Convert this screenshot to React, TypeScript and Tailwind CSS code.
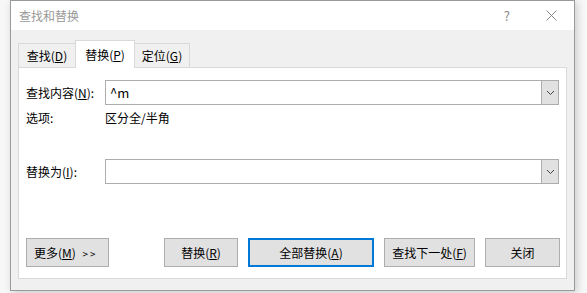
import React from 'react';

const font = { fontFamily: '"Noto Sans CJK SC", "Noto Sans", sans-serif' };

function Combo() {
  return (
    <div className="flex h-[25px] w-[454px] border border-[#adadad] bg-white">
      <div className="flex-1" />
      <div className="flex w-[17px] items-center justify-center border-l border-[#adadad] bg-[#e1e1e1]">
        <svg width="9" height="6" viewBox="0 0 9 6">
          <path d="M1 1l3.5 3.5L8 1" fill="none" stroke="#444" strokeWidth="1" />
        </svg>
      </div>
    </div>
  );
}

function Btn({ children, w, primary }: { children: React.ReactNode; w: string; primary?: boolean }) {
  return (
    <div
      className={`flex h-[29px] items-center justify-center bg-[#e1e1e1] text-[12px] text-black ${w} ${
        primary ? 'border-2 border-[#0078d7]' : 'border border-[#adadad]'
      }`}
    >
      {children}
    </div>
  );
}

export default function App() {
  return (
    <div className="h-[293px] w-[587px] overflow-hidden bg-[#f7f7f7]" style={font}>
      <div className="ml-[10px] flex h-[291px] w-[565px] flex-col border border-[#9a9a9a] bg-[#f0f0f0] shadow-[2px_2px_8px_rgba(0,0,0,0.18)]">
        {/* title bar */}
        <div className="flex h-[29px] items-center bg-white text-[12px] text-[#999]">
          <span className="ml-[8px]">查找和替换</span>
          <span className="ml-auto mr-[36px] text-[13px] text-[#888]">?</span>
          <svg className="mr-[17px]" width="11" height="11" viewBox="0 0 11 11">
            <path d="M0.5 0.5l10 10M10.5 0.5l-10 10" stroke="#888" strokeWidth="1" />
          </svg>
        </div>

        {/* tabs */}
        <div className="ml-[7px] mt-[10px] flex h-[27px] items-end text-[12px] text-black">
          <div className="-mr-px flex h-[24px] w-[58px] items-center justify-center border border-b-0 border-[#d9d9d9] bg-[#f0f0f0]">
            查找(<u>D</u>)
          </div>
          <div className="relative z-10 -mb-px flex h-[28px] w-[60px] items-center justify-center border border-b-0 border-[#d9d9d9] bg-white">
            替换(<u>P</u>)
          </div>
          <div className="-ml-px flex h-[24px] w-[56px] items-center justify-center border border-b-0 border-[#d9d9d9] bg-[#f0f0f0]">
            定位(<u>G</u>)
          </div>
        </div>

        {/* panel */}
        <div className="ml-[7px] flex h-[212px] w-[549px] flex-col border border-[#d9d9d9] bg-white text-[12px] text-black">
          <div className="mt-[12px] flex items-center">
            <span className="ml-[7px] w-[79px]">
              查找内容(<u>N</u>):
            </span>
            <div className="relative">
              <Combo />
              <span className="absolute left-[5px] top-[3px] text-[13px]">^m</span>
            </div>
          </div>
          <div className="mt-[4px] flex h-[18px] items-center">
            <span className="ml-[7px] w-[79px]">选项:</span>
            <span>区分全/半角</span>
          </div>
          <div className="mt-[32px] flex items-center">
            <span className="ml-[7px] w-[79px]">
              替换为(<u>I</u>):
            </span>
            <Combo />
          </div>
          <div className="mt-[54px] flex items-center">
            <div className="ml-[7px]">
              <Btn w="w-[83px]">
                <span className="mr-auto pl-[7px]">
                  更多(<u>M</u>) <span className="ml-[4px] text-[10px] tracking-[2px]">&gt;&gt;</span>
                </span>
              </Btn>
            </div>
            <div className="ml-[55px]">
              <Btn w="w-[74px]">
                替换(<u>R</u>)
              </Btn>
            </div>
            <div className="ml-[10px]">
              <Btn w="w-[126px]" primary>
                全部替换(<u>A</u>)
              </Btn>
            </div>
            <div className="ml-[10px]">
              <Btn w="w-[91px]">
                查找下一处(<u>F</u>)
              </Btn>
            </div>
            <div className="ml-[10px]">
              <Btn w="w-[75px]">关闭</Btn>
            </div>
          </div>
        </div>
      </div>
    </div>
  );
}
